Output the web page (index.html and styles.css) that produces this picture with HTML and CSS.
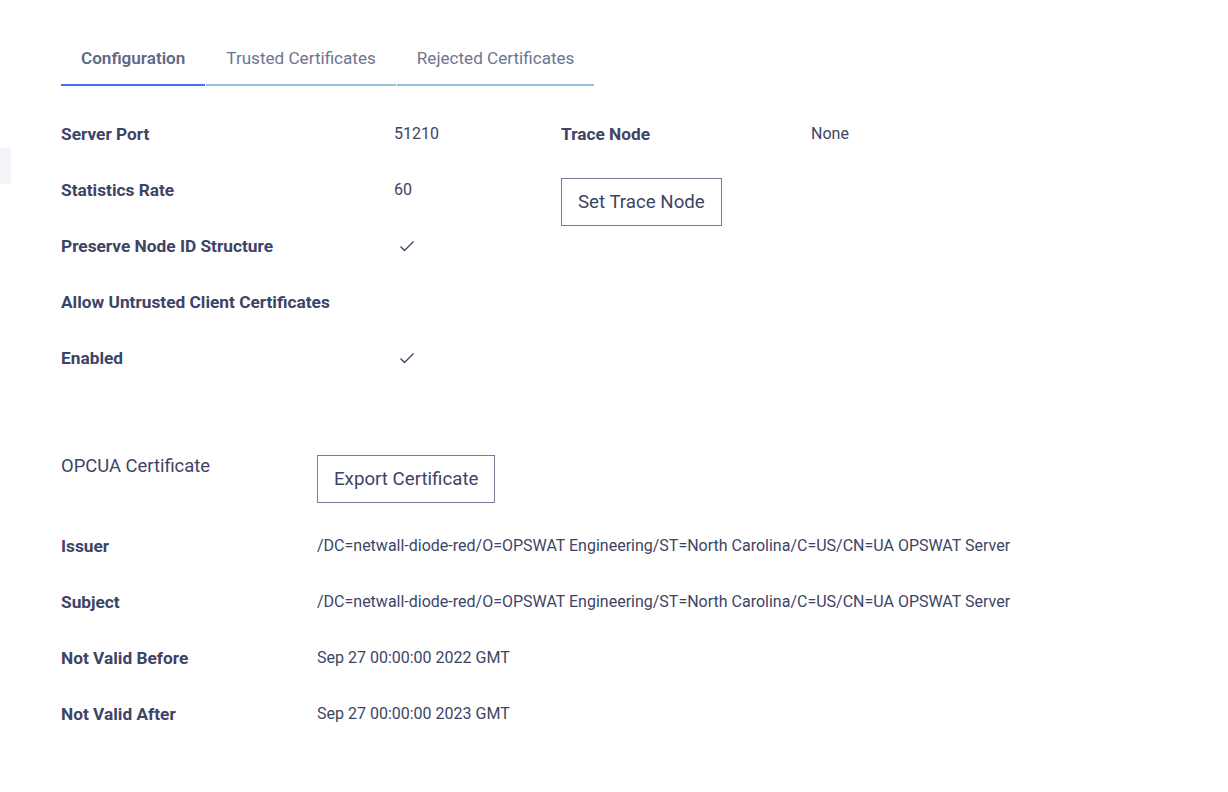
FILE: index.html
```html
<!DOCTYPE html>
<html lang="en">
<head>
  <meta charset="UTF-8"/>
  <meta name="viewport" content="width=device-width, initial-scale=1.0"/>
  <title>OPCUA Server</title>
  <link rel="stylesheet" href="styles.css">
</head>
<body>
  <div class="side-stub"></div>
  <div class="page">
    <div class="tabs">
      <div class="tab active">Configuration</div>
      <div class="tab">Trusted Certificates</div>
      <div class="tab">Rejected Certificates</div>
    </div>

    <div class="config">
      <div class="config-left">
        <div class="row">
          <div class="label">Server Port</div>
          <div class="value">51210</div>
        </div>
        <div class="row">
          <div class="label">Statistics Rate</div>
          <div class="value">60</div>
        </div>
        <div class="row">
          <div class="label">Preserve Node ID Structure</div>
          <div class="value">
            <svg class="check" viewBox="0 0 16 16"><polyline points="1.5,8.5 5.5,12.5 14.5,3.5"/></svg>
          </div>
        </div>
        <div class="row">
          <div class="label">Allow Untrusted Client Certificates</div>
          <div class="value"></div>
        </div>
        <div class="row">
          <div class="label">Enabled</div>
          <div class="value">
            <svg class="check" viewBox="0 0 16 16"><polyline points="1.5,8.5 5.5,12.5 14.5,3.5"/></svg>
          </div>
        </div>
      </div>

      <div class="config-right">
        <div class="row">
          <div class="label trace-label">Trace Node</div>
          <div class="value">None</div>
        </div>
        <button class="btn trace-btn">Set Trace Node</button>
      </div>
    </div>

    <div class="cert-head">
      <div class="cert-title">OPCUA Certificate</div>
      <button class="btn">Export Certificate</button>
    </div>

    <div class="cert">
      <div class="row">
        <div class="label cert-label">Issuer</div>
        <div class="cert-value">/DC=netwall-diode-red/O=OPSWAT Engineering/ST=North Carolina/C=US/CN=UA OPSWAT Server</div>
      </div>
      <div class="row">
        <div class="label cert-label">Subject</div>
        <div class="cert-value">/DC=netwall-diode-red/O=OPSWAT Engineering/ST=North Carolina/C=US/CN=UA OPSWAT Server</div>
      </div>
      <div class="row">
        <div class="label cert-label">Not Valid Before</div>
        <div class="cert-value">Sep 27 00:00:00 2022 GMT</div>
      </div>
      <div class="row">
        <div class="label cert-label">Not Valid After</div>
        <div class="cert-value">Sep 27 00:00:00 2023 GMT</div>
      </div>
    </div>
  </div>
</body>
</html>
```

FILE: styles.css
```css
* {
  margin: 0;
  padding: 0;
  box-sizing: border-box;
}
body {
  background-color: #ffffff;
  color: #3d4465;
  font-family: Roboto, 'Liberation Sans', sans-serif;
  font-size: 16px;
  position: relative;
  height: 100vh;
}
.side-stub {
  position: absolute;
  top: 148px;
  left: 0;
  width: 11px;
  height: 36px;
  background: #f3f4f8;
}
.page {
  padding: 37px 0 0 61px;
}
.tabs {
  display: flex;
}
.tab {
  padding: 9px 20px 14px;
  line-height: 24px;
  font-size: 17.1px;
  color: #6c7592;
  border-bottom: 2px solid #93c3d8;
  margin-right: 1px;
}
.tab.active {
  font-weight: 600;
  color: #5f6887;
  border-bottom-color: #3f73ee;
}
.config {
  display: flex;
  margin-top: 20px;
}
.config-left {
  width: 500px;
}
.row {
  display: flex;
  align-items: center;
  height: 56px;
  line-height: 24px;
}
.label {
  width: 333px;
  font-size: 17.3px;
  font-weight: 700;
}
.trace-label {
  width: 250px;
}
.value {
  display: flex;
  align-items: center;
}
.check {
  width: 16px;
  height: 16px;
  margin-left: 5px;
  fill: none;
  stroke: #3d4465;
  stroke-width: 1.4;
}
.btn {
  display: inline-block;
  font-family: Roboto, 'Liberation Sans', sans-serif;
  font-size: 18.7px;
  line-height: 24px;
  color: #3d4465;
  background: #ffffff;
  border: 1px solid #787d9c;
  padding: 11px 16px;
}
.trace-btn {
  margin-top: 16px;
}
.cert-head {
  display: flex;
  align-items: flex-start;
  margin-top: 69px;
}
.cert-title {
  width: 256px;
  font-size: 18.4px;
  line-height: 24px;
  margin-top: -1px;
}
.cert {
  margin-top: 15px;
}
.cert-label {
  width: 256px;
}
.cert-value {
  font-size: 16px;
}
```
